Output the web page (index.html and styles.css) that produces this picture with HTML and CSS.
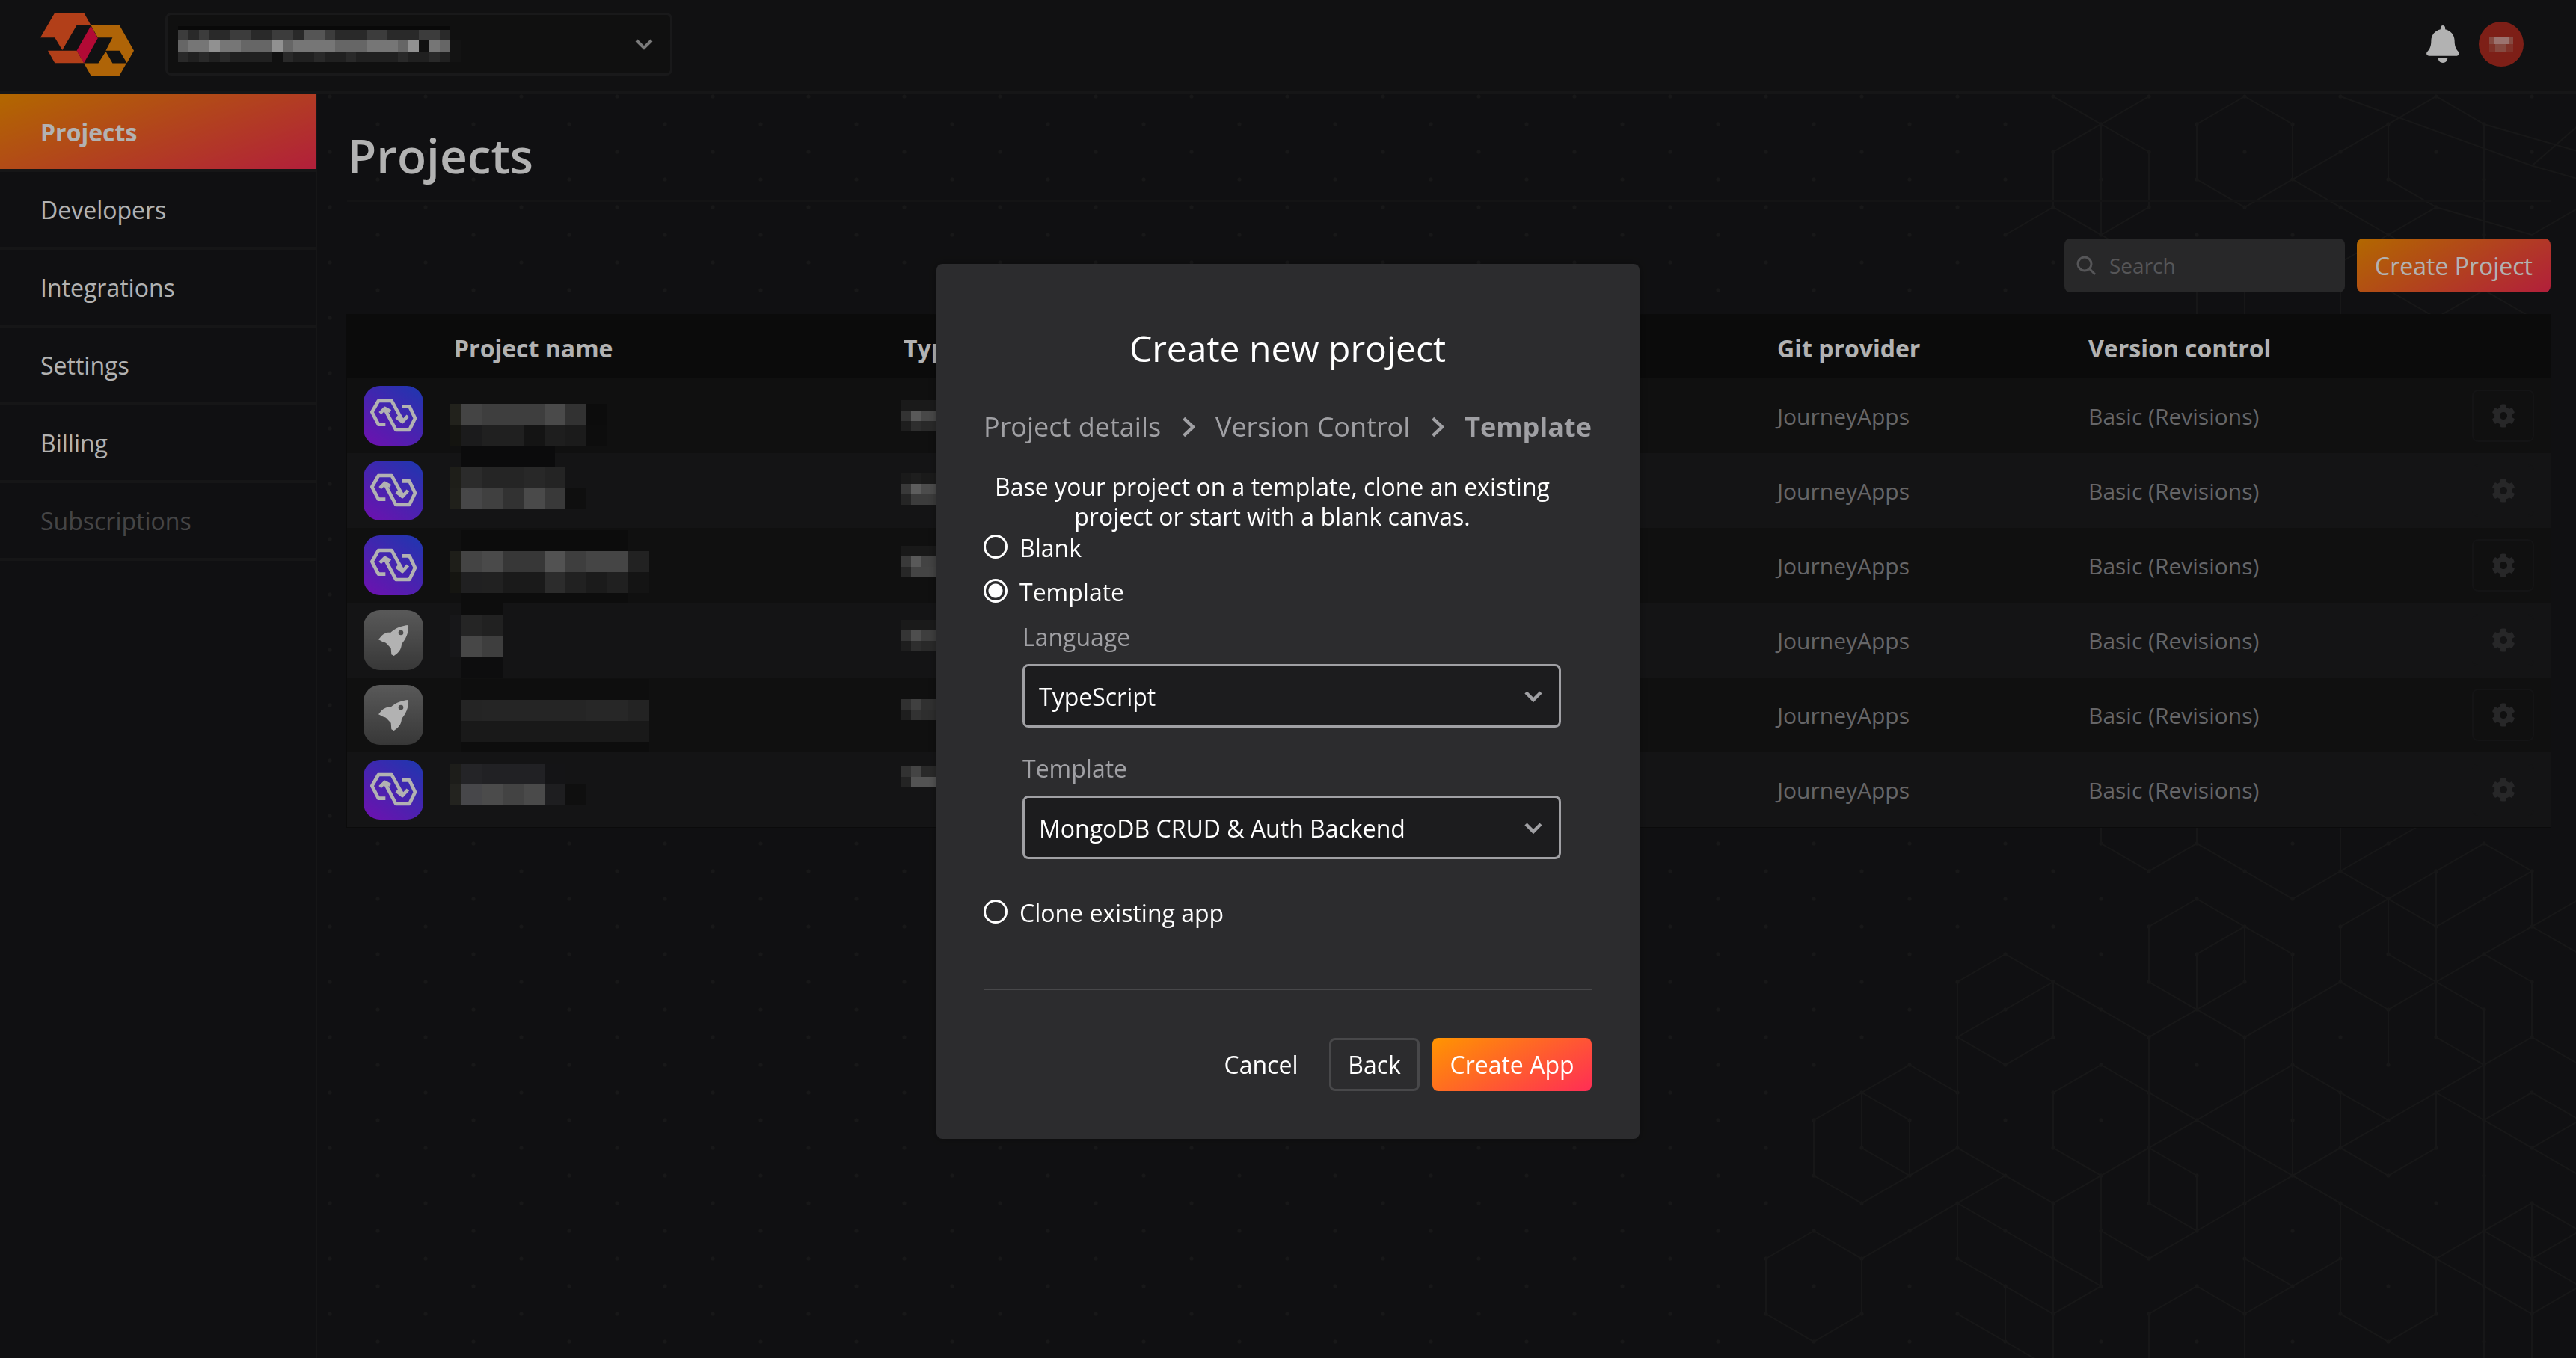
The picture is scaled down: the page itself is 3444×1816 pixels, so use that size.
FILE: index.html
```html
<!DOCTYPE html>
<html lang="en">
<head>
  <meta charset="UTF-8" />
  <title>Projects</title>
  <link rel="stylesheet" href="styles.css">
</head>
<body>
  <!-- Top bar -->
  <header class="topbar">
    <svg class="logo" viewBox="72 50 376 252" aria-hidden="true">
      <path fill="#ff5b25" d="M130 50H247L275 100H218L160 200L130 150H72ZM102 202H218L247 252H130Z"/>
      <path fill="#ff0f4c" d="M275 102L303 152L247 252L218 202Z"/>
      <path fill="#fb900b" d="M275 100H390L448 202L420 252L390 202H335L362 150H303ZM247 253H305L335 205L362 253H418L390 302H275Z"/>
    </svg>
    <div class="org-picker">
      <svg class="org-mosaic" width="378" height="48" aria-hidden="true">
        <rect width="364" height="5" fill="#0e0e0e"/>
        <path fill="#565656" d="M0 5h14v14H0zM28 5h14v14H28zM70 5h28v14H70zM126 5h28v14h-28zM196 5h14v14h-14zM252 5h28v14h-28zM322 5h28v14h-28z"/>
        <path fill="#3c3c3c" d="M14 5h14v14H14zM42 5h28v14H42zM98 5h28v14H98zM154 5h14v14h-14zM210 5h42v14h-42zM280 5h42v14h-42zM350 5h14v14h-14z"/>
        <path fill="#7a7a7a" d="M168 5h28v14h-28z"/>
        <path fill="#929292" d="M0 19h14v15H0zM42 19h14v15H42zM84 19h42v15H84zM140 19h14v15h-14zM210 19h42v15h-42zM294 19h28v15h-28zM350 19h14v15h-14z"/>
        <path fill="#aaaaaa" d="M14 19h28v15H14zM56 19h28v15H56zM126 19h14v15h-14zM154 19h56v15h-56zM252 19h42v15h-42zM336 19h14v15h-14z"/>
        <path fill="#d0d0d0" d="M42 19h14v15H42zM126 19h14v15h-14zM308 19h14v15h-14z"/>
        <path fill="#3c3c3c" d="M0 34h14v14H0zM28 34h14v14H28zM56 34h14v14H56zM140 34h14v14h-14zM182 34h14v14h-14zM224 34h14v14h-14zM294 34h14v14h-14zM336 34h14v14h-14z"/>
        <path fill="#2e2e2e" d="M14 34h14v14H14zM42 34h14v14H42zM70 34h56v14H70zM154 34h28v14h-28zM196 34h28v14h-28zM238 34h56v14h-56zM308 34h28v14h-28zM350 34h14v14h-14z"/>
        <rect x="364" y="19" width="14" height="29" fill="#1c1c1c"/>
      </svg>
      <svg class="org-chevron" viewBox="0 0 24 15" aria-hidden="true"><path d="M2 2L12 12L22 2"/></svg>
    </div>
    <div class="topbar-right">
      <svg class="bell" viewBox="0 0 448 512" aria-hidden="true"><path d="M224 512c35.32 0 63.97-28.65 63.97-64H160.03c0 35.35 28.65 64 63.97 64zm215.39-149.71c-19.32-20.76-55.47-51.99-55.47-154.29 0-77.7-54.48-139.9-127.94-155.16V32c0-17.67-14.32-32-31.98-32s-31.98 14.33-31.98 32v20.84C118.56 68.1 64.08 130.3 64.08 208c0 102.3-36.15 133.53-55.47 154.29-6 6.45-8.66 14.16-8.61 21.71.11 16.4 12.98 32 32.1 32h383.8c19.12 0 32-15.6 32.1-32 .05-7.55-2.61-15.27-8.61-21.71z"/></svg>
      <div class="avatar">
        <svg width="32" height="20" aria-hidden="true">
          <rect width="32" height="20" fill="#c06a5e"/>
          <rect x="6" y="0" width="20" height="10" fill="#dfa5a0"/>
          <rect x="0" y="10" width="8" height="10" fill="#b8483c"/>
          <rect x="22" y="10" width="10" height="10" fill="#b8483c"/>
        </svg>
      </div>
    </div>
  </header>

  <div class="layout">
    <!-- Sidebar -->
    <nav class="sidebar">
      <a class="nav-item active">Projects</a>
      <a class="nav-item">Developers</a>
      <a class="nav-item">Integrations</a>
      <a class="nav-item">Settings</a>
      <a class="nav-item">Billing</a>
      <a class="nav-item disabled">Subscriptions</a>
    </nav>

    <main class="main">
      <!-- Hexagon background, drawn on a 64x37 lattice -->
      <svg class="hex-bg" width="3020" height="1690" aria-hidden="true">
        <defs>
          <pattern id="hexDots" x="14" y="0" width="128" height="74" patternUnits="userSpaceOnUse">
            <circle cx="3" cy="3" r="2.5" fill="#232324"/>
            <circle cx="67" cy="40" r="2.5" fill="#232324"/>
          </pattern>
        </defs>
        <rect width="3020" height="1690" fill="url(#hexDots)"/>
        <g transform="translate(1809 1002) scale(64 37)">
          <path class="hex-line" d="M7 4L6 5V11M7 4L10 7L11 6L12 7L14 5L15 6L16 5L19 2M8 5L6 7L7 8L8 7V5M11 2L10 3V5L11 6L12 5V3L11 4V6M11 2L13 4V8M9 -1V0L10 1L11 0L13 2L14 1L16 -1M11 -1V0M14 -1V1L16 3L17 2L18 1L17 0L14 3V5M15 2V4L17 6V8M16 1V7L17 8L18 7V5L17 4L15 6V8M17 4L18 3V1M18 3L19 4M18 7L19 8"/>
          <path class="hex-line" d="M5 8L3 10V12L4 13L6 11L8 13L13 8L15 10L17 8M5 8L6 9M4 9V11L5 12V10L4 9M9 8L8 9V11L9 12M9 8L13 12L15 10M10 7V13L11 14V12L10 11M12 7V19M13 8V12M14 9V11L15 12L16 11V9M17 8V14L18 15L19 14M16 11L15 12L14 11L13 12L12 13L11 14M13 12L16 15L18 13L19 14M18 13V15L19 16M19 10L18 11L17 10L18 9L19 10M18 11L19 12M17 10L16 9"/>
          <path class="hex-line" d="M3 14L2 15V17L3 18L4 17V15L3 14M3 14L4 15L7 12M6 13V15L8 17L9 16V12M8 13V19M6 13L8 15L9 16M7 16V18L9 20M9 14L10 15L11 14M12 15L13 16L14 15V13L13 12M14 15L13 16L12 17M15 14L16 15V17L15 18L14 17V15M16 15L18 17L19 16M18 15V19M17 14V19M11 16L10 17V19M11 16L12 17V19M6 17L7 18"/>
          <path class="hex-line" d="M8 -27L9 -26L10 -27M9 -26L10 -25V-23L9 -22L8 -23V-25L9 -26V-22M12 -27L13 -26V-24L12 -23L11 -24V-26L12 -27M12 -23L16 -27L17 -26L19 -25M14 -27L18 -24.5L19 -26M15 -26V-24L16 -23L14 -21M17 -26V-20M13 -24L15 -22L16 -21M8 -23L7 -22M9 -22L10 -21M11 -20V-19M12 -20V-19M14 -20V-19M15 -20L16 -19L17 -20L18 -19M18 -24.5L19 -24M16 -23L18 -22L19 -23"/>
        </g>
      </svg>

      <div class="page-head">
        <h1>Projects</h1>
      </div>

      <div class="toolbar">
        <div class="search">
          <svg viewBox="0 0 26 26" aria-hidden="true"><circle cx="11" cy="11" r="9"/><path d="M17.5 17.5L25 25"/></svg>
          <span>Search</span>
        </div>
        <button class="create-btn">Create Project</button>
      </div>

      <section class="table">
        <div class="table-row table-head">
          <div></div>
          <div>Project name</div>
          <div>Type</div>
          <div>Git provider</div>
          <div>Version control</div>
        </div>

        <div class="table-row">
          <div class="app-icon app-link"><svg viewBox="0 0 240 240" aria-hidden="true"><use href="#linkGlyph"/></svg></div>
          <svg class="name-mosaic" width="280" height="100" aria-hidden="true">
            <rect x="0" y="34" width="15" height="28" fill="#313129"/><rect x="0" y="62" width="15" height="28" fill="#1e1e18"/>
            <path fill="#626262" d="M15 34h28v28H15z"/><path fill="#5a5a5a" d="M43 34h84v28H43z"/><path fill="#6a6a6a" d="M127 34h28v28h-28z"/><path fill="#484848" d="M155 34h28v28h-28z"/><path fill="#121212" d="M183 34h28v28h-28z"/>
            <path fill="#282829" d="M15 62h28v28H15z"/><path fill="#2e2e2e" d="M43 62h56v28H43z"/><path fill="#1e1e1e" d="M99 62h28v28H99z"/><path fill="#2c2c2c" d="M127 62h28v28h-28z"/><path fill="#272727" d="M155 62h28v28h-28z"/><path fill="#141414" d="M183 62h28v28h-28z"/>
          </svg>
          <svg class="type-mosaic" width="60" height="100" aria-hidden="true">
            <path fill="#4a4a4a" d="M0 43h14v14H0z"/><path fill="#808080" d="M14 43h14v14H14z"/><path fill="#686868" d="M28 43h20v14H28z"/>
            <path fill="#2c2c2c" d="M0 57h14v14H0z"/><path fill="#424242" d="M14 57h14v14H14z"/><path fill="#3c3c3c" d="M28 57h20v14H28z"/>
            <path fill="#262626" d="M0 29h48v14H0z"/>
          </svg>
          <div class="cell">JourneyApps</div>
          <div class="cell cell-version">Basic (Revisions)<button class="gear-btn"><svg viewBox="0 0 512 512" aria-hidden="true"><use href="#gearGlyph"/></svg></button></div>
        </div>

        <div class="table-row">
          <div class="app-icon app-link"><svg viewBox="0 0 240 240" aria-hidden="true"><use href="#linkGlyph"/></svg></div>
          <svg class="name-mosaic" width="280" height="100" aria-hidden="true">
            <path fill="#111112" d="M15 -10h126v28H15z"/>
            <rect x="0" y="18" width="15" height="28" fill="#2b2b24"/><rect x="0" y="46" width="15" height="28" fill="#2f2f28"/>
            <path fill="#3e3e3e" d="M15 18h28v28H15z"/><path fill="#363636" d="M43 18h56v28H43z"/><path fill="#3a3a3a" d="M99 18h28v28H99z"/><path fill="#343434" d="M127 18h28v28h-28z"/>
            <path fill="#666668" d="M15 46h28v28H15z"/><path fill="#5c5c5c" d="M43 46h28v28H43z"/><path fill="#484848" d="M71 46h28v28H71z"/><path fill="#6a6a6a" d="M99 46h28v28H99z"/><path fill="#525252" d="M127 46h28v28h-28z"/><path fill="#161616" d="M155 46h28v28h-28z"/>
          </svg>
          <svg class="type-mosaic" width="60" height="100" aria-hidden="true">
            <path fill="#262626" d="M0 27h14v14H0zM28 27h20v14H28z"/><path fill="#2c2c2c" d="M14 27h14v14H14z"/>
            <path fill="#525252" d="M0 41h14v14H0z"/><path fill="#868686" d="M14 41h14v14H14z"/><path fill="#6e6e6e" d="M28 41h20v14H28z"/>
            <path fill="#363636" d="M0 55h14v14H0z"/><path fill="#565656" d="M14 55h34v14H14z"/>
          </svg>
          <div class="cell">JourneyApps</div>
          <div class="cell cell-version">Basic (Revisions)<button class="gear-btn"><svg viewBox="0 0 512 512" aria-hidden="true"><use href="#gearGlyph"/></svg></button></div>
        </div>

        <div class="table-row">
          <div class="app-icon app-link"><svg viewBox="0 0 240 240" aria-hidden="true"><use href="#linkGlyph"/></svg></div>
          <svg class="name-mosaic" width="280" height="100" aria-hidden="true">
            <path fill="#121212" d="M15 3h224v28H15z"/>
            <rect x="0" y="31" width="15" height="28" fill="#2c2c24"/><rect x="0" y="59" width="15" height="28" fill="#1f1f19"/>
            <path fill="#626262" d="M15 31h28v28H15z"/><path fill="#6a6a6a" d="M43 31h28v28H43z"/><path fill="#505050" d="M71 31h56v28H71z"/><path fill="#767676" d="M127 31h28v28h-28z"/><path fill="#5a5a5a" d="M155 31h28v28h-28z"/><path fill="#646464" d="M183 31h56v28h-56z"/><path fill="#323232" d="M239 31h28v28h-28z"/>
            <path fill="#2e2e30" d="M15 59h28v28H15z"/><path fill="#303030" d="M43 59h28v28H43z"/><path fill="#262626" d="M71 59h56v28H71z"/><path fill="#404040" d="M127 59h28v28h-28z"/><path fill="#303030" d="M155 59h28v28h-28z"/><path fill="#282828" d="M183 59h28v28h-28z"/><path fill="#2e2e2e" d="M211 59h28v28h-28z"/><path fill="#1e1e1e" d="M239 59h28v28h-28z"/>
            <path fill="#131314" d="M15 87h224v13H15z"/>
          </svg>
          <svg class="type-mosaic" width="60" height="100" aria-hidden="true">
            <path fill="#242424" d="M0 24h48v14H0z"/>
            <path fill="#525252" d="M0 38h14v14H0z"/><path fill="#808080" d="M14 38h14v14H14z"/><path fill="#606060" d="M28 38h20v14H28z"/>
            <path fill="#383838" d="M0 52h14v14H0z"/><path fill="#626262" d="M14 52h34v14H14z"/>
          </svg>
          <div class="cell">JourneyApps</div>
          <div class="cell cell-version">Basic (Revisions)<button class="gear-btn"><svg viewBox="0 0 512 512" aria-hidden="true"><use href="#gearGlyph"/></svg></button></div>
        </div>

        <div class="table-row">
          <div class="app-icon app-rocket"><svg viewBox="0 0 240 240" aria-hidden="true"><use href="#rocketGlyph"/></svg></div>
          <svg class="name-mosaic" width="280" height="100" aria-hidden="true">
            <path fill="#131314" d="M15 0h56v17H15z"/>
            <rect x="0" y="17" width="15" height="56" fill="#222224"/>
            <path fill="#363636" d="M15 17h28v28H15z"/><path fill="#303030" d="M43 17h28v28H43z"/>
            <path fill="#666666" d="M15 45h28v28H15z"/><path fill="#5a5a5a" d="M43 45h28v28H43z"/>
            <path fill="#141415" d="M15 73h56v27H15z"/>
          </svg>
          <svg class="type-mosaic" width="60" height="100" aria-hidden="true">
            <path fill="#262626" d="M0 23h48v14H0z"/>
            <path fill="#4c4c4c" d="M0 37h14v14H0z"/><path fill="#707070" d="M14 37h14v14H14z"/><path fill="#5a5a5a" d="M28 37h20v14H28z"/>
            <path fill="#2c2c2c" d="M0 51h14v14H0z"/><path fill="#424242" d="M14 51h14v14H14z"/><path fill="#3c3c3c" d="M28 51h20v14H28z"/>
          </svg>
          <div class="cell">JourneyApps</div>
          <div class="cell cell-version">Basic (Revisions)<button class="gear-btn"><svg viewBox="0 0 512 512" aria-hidden="true"><use href="#gearGlyph"/></svg></button></div>
        </div>

        <div class="table-row">
          <div class="app-icon app-rocket"><svg viewBox="0 0 240 240" aria-hidden="true"><use href="#rocketGlyph"/></svg></div>
          <svg class="name-mosaic" width="280" height="100" aria-hidden="true">
            <path fill="#151515" d="M15 2h252v28H15z"/>
            <path fill="#343434" d="M15 30h28v28H15z"/><path fill="#363636" d="M43 30h140v28H43z"/><path fill="#383838" d="M183 30h56v28h-56z"/><path fill="#333" d="M239 30h28v28h-28z"/>
            <path fill="#252525" d="M15 58h252v28H15z"/>
            <path fill="#141414" d="M15 86h252v14H15z"/>
          </svg>
          <svg class="type-mosaic" width="60" height="100" aria-hidden="true">
            <path fill="#464646" d="M0 29h14v14H0z"/><path fill="#5c5c5c" d="M14 29h14v14H14z"/><path fill="#464646" d="M28 29h20v14H28z"/>
            <path fill="#2c2c2c" d="M0 43h14v14H0z"/><path fill="#484848" d="M14 43h14v14H14z"/><path fill="#424242" d="M28 43h20v14H28z"/>
          </svg>
          <div class="cell">JourneyApps</div>
          <div class="cell cell-version">Basic (Revisions)<button class="gear-btn"><svg viewBox="0 0 512 512" aria-hidden="true"><use href="#gearGlyph"/></svg></button></div>
        </div>

        <div class="table-row">
          <div class="app-icon app-link"><svg viewBox="0 0 240 240" aria-hidden="true"><use href="#linkGlyph"/></svg></div>
          <svg class="name-mosaic" width="280" height="100" aria-hidden="true">
            <rect x="0" y="15" width="15" height="28" fill="#2a2a26"/><rect x="0" y="43" width="15" height="28" fill="#33332d"/>
            <path fill="#343438" d="M15 15h28v28H15z"/><path fill="#303034" d="M43 15h84v28H43z"/><path fill="#1e1e20" d="M127 15h28v28h-28z"/>
            <path fill="#66666a" d="M15 43h28v28H15z"/><path fill="#6c6c6c" d="M43 43h28v28H43z"/><path fill="#606060" d="M71 43h28v28H71z"/><path fill="#6a6a6a" d="M99 43h28v28H99z"/><path fill="#2c2c2e" d="M127 43h28v28h-28z"/><path fill="#161616" d="M155 43h28v28h-28z"/>
          </svg>
          <svg class="type-mosaic" width="60" height="100" aria-hidden="true">
            <path fill="#484848" d="M0 19h14v14H0z"/><path fill="#626262" d="M14 19h14v14H14z"/><path fill="#3c3c3c" d="M28 19h20v14H28z"/>
            <path fill="#343434" d="M0 33h14v14H0z"/><path fill="#787878" d="M14 33h34v14H14z"/>
          </svg>
          <div class="cell">JourneyApps</div>
          <div class="cell cell-version">Basic (Revisions)<button class="gear-btn"><svg viewBox="0 0 512 512" aria-hidden="true"><use href="#gearGlyph"/></svg></button></div>
        </div>
      </section>
    </main>
  </div>

  <!-- Shared icon glyphs -->
  <svg class="glyphs" aria-hidden="true">
    <defs>
      <g id="linkGlyph" fill="none" stroke="#fff" stroke-width="14" stroke-linejoin="round">
        <path d="M88 155H60L34 105L60 60H113L157 140M155 82H184L207 130L184 177H130L86 94M66 110L86 90L108 102M132 125L156 144L178 120"/>
      </g>
      <path id="rocketGlyph" fill="#fff" fill-rule="evenodd" d="M180 60C155 62 130 70 108 90C95 88 78 92 60 118C72 125 82 128 90 131L110 152L112 178L122 183C140 172 152 158 153 135C170 115 182 90 180 60ZM150 80A10 10 0 1 0 150 100A10 10 0 1 0 150 80Z"/>
      <path id="gearGlyph" d="M487.4 315.7l-42.6-24.6c4.3-23.2 4.3-47 0-70.2l42.6-24.6c4.9-2.8 7.1-8.6 5.5-14-11.1-35.6-30-67.8-54.7-94.6-3.8-4.1-10-5.1-14.8-2.3L380.8 110c-17.9-15.4-38.5-27.3-60.8-35.1V25.8c0-5.6-3.9-10.5-9.4-11.7-36.7-8.2-74.3-7.8-109.2 0-5.5 1.2-9.4 6.1-9.4 11.7V75c-22.2 7.9-42.8 19.8-60.8 35.1L88.7 85.5c-4.9-2.8-11-1.9-14.8 2.3-24.7 26.7-43.6 58.9-54.7 94.6-1.7 5.4.6 11.2 5.5 14L67.3 221c-4.3 23.2-4.3 47 0 70.2l-42.6 24.6c-4.9 2.8-7.1 8.6-5.5 14 11.1 35.6 30 67.8 54.7 94.6 3.8 4.1 10 5.1 14.8 2.3l42.6-24.6c17.9 15.4 38.5 27.3 60.8 35.1v49.2c0 5.6 3.9 10.5 9.4 11.7 36.7 8.2 74.3 7.8 109.2 0 5.5-1.2 9.4-6.1 9.4-11.7v-49.2c22.2-7.9 42.8-19.8 60.8-35.1l42.6 24.6c4.9 2.8 11 1.9 14.8-2.3 24.7-26.7 43.6-58.9 54.7-94.6 1.5-5.5-.7-11.3-5.6-14.1zM256 336c-44.1 0-80-35.9-80-80s35.9-80 80-80 80 35.9 80 80-35.9 80-80 80z"/>
    </defs>
  </svg>

  <!-- Create project modal -->
  <div class="overlay">
    <div class="modal">
      <h2 class="modal-title">Create new project</h2>

      <div class="steps">
        <span>Project details</span>
        <svg class="step-chevron" viewBox="0 0 20 30" aria-hidden="true"><path d="M3 2L17 15L3 28"/></svg>
        <span>Version Control</span>
        <svg class="step-chevron" viewBox="0 0 20 30" aria-hidden="true"><path d="M3 2L17 15L3 28"/></svg>
        <span class="step-current">Template</span>
      </div>

      <p class="modal-text">Base your project on a template, clone an existing project or start with a blank canvas.</p>

      <label class="radio-row radio-first"><input type="radio" name="source"> Blank</label>
      <label class="radio-row"><input type="radio" name="source" checked> Template</label>

      <div class="sub-fields">
        <div class="field-label">Language</div>
        <div class="select-box">TypeScript<svg viewBox="0 0 24 16" aria-hidden="true"><path d="M2 2L12 12L22 2"/></svg></div>
        <div class="field-label field-gap">Template</div>
        <div class="select-box">MongoDB CRUD &amp; Auth Backend<svg viewBox="0 0 24 16" aria-hidden="true"><path d="M2 2L12 12L22 2"/></svg></div>
      </div>

      <label class="radio-row clone-row"><input type="radio" name="source"> Clone existing app</label>

      <hr class="divider">

      <div class="modal-actions">
        <button class="btn-plain">Cancel</button>
        <button class="btn-outline">Back</button>
        <button class="btn-primary">Create App</button>
      </div>
    </div>
  </div>
</body>
</html>
```

FILE: styles.css
```css
* {
  margin: 0;
  padding: 0;
  box-sizing: border-box;
  font-family: "Open Sans", "Liberation Sans", sans-serif;
}

body {
  background-color: #18181a;
  color: #fff;
  width: 3444px;
  height: 1816px;
  overflow: hidden;
  font-size: 32px;
}

button {
  border: none;
  background: none;
  color: inherit;
  font-size: 32px;
}

.topbar {
  height: 126px;
  display: flex;
  align-items: center;
  background: #19191a;
  border-bottom: 4px solid #202021;
  padding: 0 70px 4px 54px;
}

.logo {
  width: 125px;
  height: 84px;
}

.org-picker {
  width: 678px;
  height: 84px;
  margin-left: 42px;
  padding: 0 23px 0 14px;
  display: flex;
  align-items: center;
  justify-content: space-between;
  border: 3px solid #252526;
  border-radius: 8px;
  background: #171718;
}

.org-chevron {
  width: 24px;
  height: 15px;
  fill: none;
  stroke: #b0b0b0;
  stroke-width: 4;
}

.topbar-right {
  margin-left: auto;
  display: flex;
  align-items: center;
  gap: 26px;
}

.bell {
  width: 44px;
  height: 50px;
  fill: #fff;
}

.avatar {
  width: 60px;
  height: 60px;
  border-radius: 50%;
  background: #b32d21;
  display: flex;
  align-items: center;
  justify-content: center;
}

.layout {
  display: flex;
  height: 1690px;
}

.sidebar {
  width: 424px;
  flex-shrink: 0;
  background: #18181a;
  border-right: 2px solid #202021;
}

.nav-item {
  display: flex;
  align-items: center;
  height: 104px;
  padding-left: 54px;
  border-bottom: 4px solid #202021;
}

.nav-item.active {
  font-weight: 700;
  background: linear-gradient(160deg, #ff9500 0%, #ff2d55 100%);
  background-clip: padding-box;
}

.nav-item.disabled {
  color: #636365;
}

.main {
  position: relative;
  flex: 1;
  padding: 0 34px 0 40px;
}

.hex-bg {
  position: absolute;
  left: 0;
  top: 0;
}

.hex-line {
  fill: none;
  stroke: #222223;
  stroke-width: 2;
  vector-effect: non-scaling-stroke;
}

.glyphs {
  position: absolute;
  width: 0;
  height: 0;
}

.page-head {
  position: relative;
  height: 144px;
  padding-top: 42px;
  border-bottom: 3px solid #1e1e1f;
}

.page-head h1 {
  font-size: 64px;
  line-height: 80px;
  font-weight: 600;
}

.toolbar {
  position: relative;
  display: flex;
  justify-content: flex-end;
  gap: 16px;
  margin-top: 49px;
}

.search {
  width: 375px;
  height: 72px;
  display: flex;
  align-items: center;
  gap: 18px;
  padding-left: 16px;
  background: #3a3a3c;
  border-radius: 8px;
  color: #7b7b7e;
  font-size: 28px;
}

.search svg {
  width: 26px;
  height: 26px;
  fill: none;
  stroke: #7b7b7e;
  stroke-width: 3;
}

.create-btn {
  width: 259px;
  height: 72px;
  border-radius: 8px;
  background: linear-gradient(150deg, #ff9500, #ff2d55);
}

.table {
  position: relative;
  margin-top: 30px;
  background: #131314;
  box-shadow: 0 0 0 1px #111;
}

.table-row {
  display: grid;
  grid-template-columns: 143px 601px 1168px 416px 1fr;
  align-items: center;
  height: 100px;
}

.table-row:nth-child(odd) {
  background: #1d1d1f;
}

.table-row:nth-child(even) {
  background: #171717;
}

.table-row.table-head {
  height: 85px;
  padding-top: 3px;
  background: #101010;
  font-weight: 700;
}

.app-icon {
  width: 80px;
  height: 80px;
  margin-left: 22px;
  border-radius: 22px;
}

.app-icon svg {
  display: block;
  width: 80px;
  height: 80px;
}

.app-link {
  background: linear-gradient(215deg, #2a50fb 0%, #a018fb 100%);
}

.app-rocket {
  background: linear-gradient(180deg, #808080, #505050);
}

.name-mosaic {
  margin-left: -6px;
  overflow: visible;
}

.type-mosaic {
  margin-left: -4px;
  overflow: visible;
}

.cell {
  color: #929295;
  font-size: 30px;
}

.cell-version {
  position: relative;
}

.gear-btn {
  position: absolute;
  right: 22px;
  top: 50%;
  transform: translateY(-50%);
  width: 83px;
  height: 70px;
  display: flex;
  align-items: center;
  justify-content: center;
  border: 2px solid #1d1d1f;
  border-radius: 8px;
}

.gear-btn svg {
  width: 32px;
  height: 32px;
  fill: #38383a;
}

/* modal */
.overlay {
  position: fixed;
  top: 0;
  left: 0;
  right: 0;
  bottom: 0;
  display: flex;
  justify-content: center;
  align-items: flex-start;
  padding-top: 353px;
  background: rgba(0, 0, 0, 0.3);
}

.modal {
  width: 940px;
  height: 1170px;
  padding: 81px 64px 64px 63px;
  background: #2c2c2e;
  border-radius: 8px;
  box-shadow: 0 0 12px rgba(0, 0, 0, 0.35);
}

.modal-title {
  font-size: 48px;
  line-height: 64px;
  font-weight: 400;
  text-align: center;
}

.steps {
  display: flex;
  align-items: center;
  gap: 27.5px;
  margin-top: 53px;
  font-size: 36px;
  line-height: 40px;
  color: #a0a0a4;
  white-space: nowrap;
}

.step-chevron {
  width: 20px;
  height: 30px;
  fill: none;
  stroke: #a0a0a4;
  stroke-width: 5;
}

.step-current {
  font-weight: 700;
}

.modal-text {
  width: 772px;
  margin-top: 40px;
  line-height: 40px;
  text-align: center;
}

.radio-row {
  display: flex;
  align-items: flex-start;
  gap: 16px;
  line-height: 40px;
  margin-bottom: 18px;
}

.radio-first {
  margin-top: 2px;
  margin-bottom: 19px;
}

.radio-row input {
  appearance: none;
  width: 32px;
  height: 32px;
  margin-top: 2px;
  border: 3px solid #fff;
  border-radius: 50%;
  background: transparent;
}

.radio-row input:checked {
  background: radial-gradient(circle, #fff 0 9px, transparent 10px);
}

.sub-fields {
  padding-left: 52px;
  margin-top: 20px;
}

.field-label {
  line-height: 40px;
  color: #a0a0a4;
  margin-bottom: 16px;
}

.field-gap {
  margin-top: 35px;
}

.select-box {
  width: 720px;
  height: 85px;
  padding: 2px 22px 0 19px;
  display: flex;
  align-items: center;
  justify-content: space-between;
  background: #1c1c1e;
  border: 3px solid #a0a0a4;
  border-radius: 8px;
}

.select-box svg {
  width: 24px;
  height: 16px;
  fill: none;
  stroke: #a0a0a4;
  stroke-width: 4.5;
}

.clone-row {
  margin-top: 52px;
  margin-bottom: 0;
}

.divider {
  border: none;
  height: 2px;
  background: #48484a;
  margin-top: 81px;
}

.modal-actions {
  display: flex;
  justify-content: flex-end;
  align-items: center;
  gap: 17px;
  margin-top: 64px;
}

.modal-actions button {
  height: 71px;
  border-radius: 8px;
}

.btn-plain {
  width: 148px;
}

.btn-outline {
  width: 121px;
  border: 3px solid #48484a !important;
}

.btn-primary {
  width: 213px;
  background: linear-gradient(150deg, #ff9500, #ff2d55);
}
```
